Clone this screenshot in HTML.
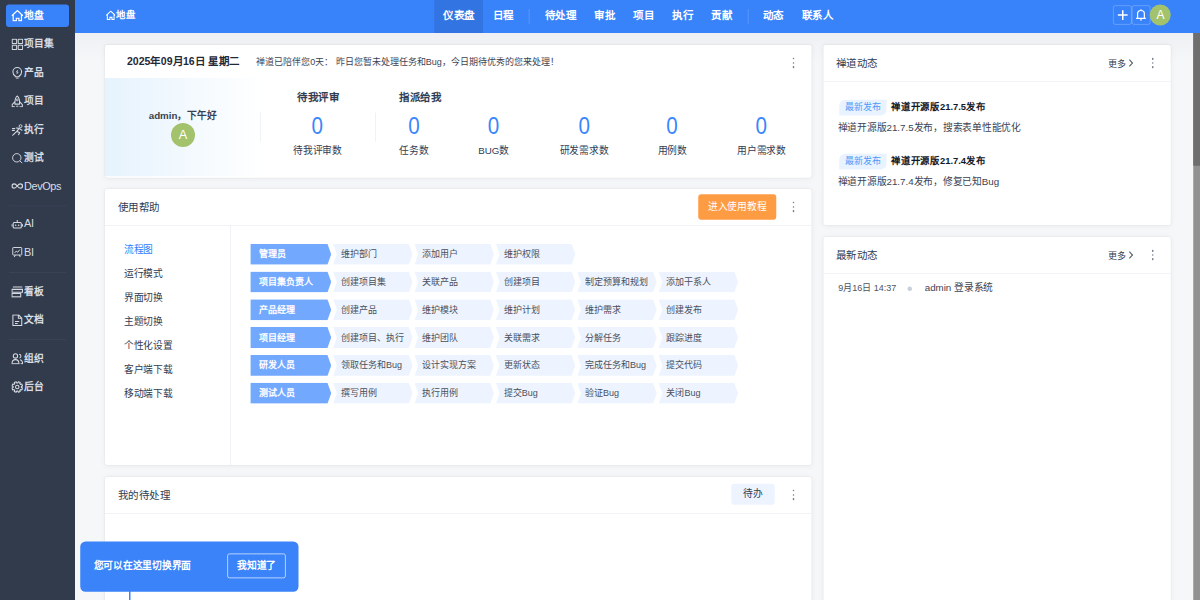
<!DOCTYPE html>
<html lang="zh-CN"><head><meta charset="utf-8">
<style>
*{margin:0;padding:0;box-sizing:border-box}
html,body{width:1200px;height:600px;overflow:hidden;background:#f3f4f7}
body{font-family:"Liberation Sans",sans-serif;color:#313c52}
#root{position:absolute;left:0;top:0;width:1600px;height:800px;transform:scale(.75);transform-origin:0 0;background:#f6f7f9;overflow:hidden}
.a{position:absolute;white-space:nowrap}
#side{position:absolute;left:0;top:0;width:100px;height:800px;background:#313b4c}
.si{position:absolute;left:15px;height:18px;color:#d9dde4;font-size:13px;font-weight:bold;line-height:18px;display:flex;align-items:center;white-space:nowrap}
.si svg{width:16px;height:16px;margin-right:1px;flex:none}
.sdiv{position:absolute;left:12px;width:76px;height:1px;background:#3d4558}
#act{position:absolute;left:8px;top:5.8px;width:84px;height:30.2px;background:#3883fa;border-radius:4px}
#hdr{position:absolute;left:100px;top:0;width:1500px;height:44px;background:#3883fa}
.nav{position:absolute;top:0;height:44px;line-height:40px;color:#fff;font-size:14px;font-weight:bold;white-space:nowrap}
.nsep{position:absolute;top:12px;width:1px;height:20px;background:rgba(255,255,255,.22)}
.card{position:absolute;background:#fff;border-radius:3px;box-shadow:0 0 0 1px rgba(0,0,0,.03),0 1px 8px rgba(20,30,60,.05)}
.dots{position:absolute;width:3px}
.dots i{display:block;width:2.4px;height:2.4px;background:#737986;border-radius:50%;margin-bottom:3.2px}
.ttl{font-size:14px;color:#313c52}
.num{font-size:32px;color:#3a86fc;text-align:center;line-height:34px;transform:scaleX(.86)}
.lbl{font-size:13px;color:#313c52;text-align:center}
.role,.step{position:absolute;height:28px;line-height:28px;font-size:12px;white-space:nowrap}
.role{background:#73a8ff;color:#fff;clip-path:polygon(0 0,103px 0,108px 50%,103px 100%,0 100%);width:108px;padding-left:12px;font-weight:bold}
.step{background:#edf4ff;color:#4a4f5c;clip-path:polygon(0 0,101px 0,106px 50%,101px 100%,0 100%,5px 50%);width:106px;padding-left:10.5px}
.hl{position:absolute;left:0;width:100%;height:1px;background:#eceef2}
.li{position:absolute;left:60px;font-size:13px;line-height:18px;white-space:nowrap}
</style></head><body>
<div id="root">
<div id="side">
  <div id="act"></div>
<div class="si" style="top:11.7px;color:#fff;"><svg viewBox="0 0 16 16" fill="none" stroke="#fff" stroke-width="1.3"><path stroke-width="1.6" d="M.8 8 8.2 1 15.6 8M2.6 6.5V14.6H6.8V11.3H10.2V14.6H13.6V6.5"/></svg>地盘</div>
<div class="si" style="top:49.5px;"><svg viewBox="0 0 16 16" fill="none" stroke="#d6d9e0" stroke-width="1.3"><g stroke-width="1.35"><rect x="1.3" y="1.2" width="5.9" height="5.9" rx=".4"/><rect x="9.3" y="1.2" width="5.9" height="5.9" rx=".4"/><rect x="1.3" y="9.2" width="5.9" height="5.9" rx=".4"/><rect x="9.3" y="9.2" width="5.9" height="5.9" rx=".4"/></g></svg>项目集</div>
<div class="si" style="top:87.5px;"><svg viewBox="0 0 16 16" fill="none" stroke="#d6d9e0" stroke-width="1.3"><path stroke-width="1.4" d="M5.4 12.4C3.4 11.3 2.2 9.2 2.2 6.8A5.8 5.8 0 0 1 13.8 6.8C13.8 9.2 12.6 11.3 10.6 12.4V13.4H5.4ZM6.2 15.4H9.8"/><path stroke-width="1.1" d="M8.8 4.4 6.8 7.1H9.2L7.2 9.8"/></svg>产品</div>
<div class="si" style="top:125.5px;"><svg viewBox="0 0 16 16" fill="none" stroke="#d6d9e0" stroke-width="1.3"><path stroke-width="1.4" stroke-linejoin="round" d="M8 .8C5.5 3 4.6 6.5 4.9 11.8H11.1C11.4 6.5 10.5 3 8 .8ZM4.9 8.6 1.2 12.4V15.2H4.9M11.1 8.6 14.8 12.4V15.2H11.1M6.6 14.6H9.4"/><circle cx="8" cy="6.2" r="1.3" stroke-width="1.2"/></svg>项目</div>
<div class="si" style="top:163.5px;"><svg viewBox="0 0 16 16" fill="none" stroke="#d6d9e0" stroke-width="1.3"><circle cx="12.4" cy="3.2" r="1.9" stroke-width="1.3"/><path stroke-width="1.5" stroke-linecap="round" stroke-linejoin="round" d="M10.6 6.2 7.4 10.2 11.2 11.8 9.8 14.6M7.4 10.2 1.8 15.4M10.6 6.2 14.2 8.6M10.6 6.2 6.8 5.6M1.6 6.4H4.6M1.4 8.8H4.2"/></svg>执行</div>
<div class="si" style="top:201.5px;"><svg viewBox="0 0 16 16" fill="none" stroke="#d6d9e0" stroke-width="1.3"><circle cx="7.4" cy="7.4" r="5.6"/><path d="M11.4 11.4 14.6 14.6"/></svg>测试</div>
<div class="si" style="top:239.5px;font-weight:normal;font-size:14.5px;letter-spacing:-.5px;margin-top:-1px;"><svg viewBox="0 0 16 16" fill="none" stroke="#d6d9e0" stroke-width="1.3"><path stroke-width="1.6" d="M8 8C6.4 5.9 5.1 5.1 3.9 5.1A2.9 2.9 0 0 0 3.9 10.9C5.1 10.9 6.4 10.1 8 8 9.6 5.9 10.9 5.1 12.1 5.1A2.9 2.9 0 0 1 12.1 10.9C10.9 10.9 9.6 10.1 8 8Z"/></svg>DevOps</div>
<div class="si" style="top:290.0px;font-weight:normal;font-size:14.5px;letter-spacing:-.5px;margin-top:-1px;"><svg viewBox="0 0 16 16" fill="none" stroke="#d6d9e0" stroke-width="1.3"><rect x="2.6" y="6.6" width="10.8" height="7.4" rx="1.3" stroke-width="1.4"/><path stroke-width="1.4" d="M8 6.6V3.2M1 9v3M15 9v3"/><circle cx="6" cy="10.3" r=".5" fill="#d6d9e0"/><circle cx="10" cy="10.3" r=".5" fill="#d6d9e0"/></svg>AI</div>
<div class="si" style="top:328.0px;font-weight:normal;font-size:14.5px;letter-spacing:-.5px;margin-top:-1px;"><svg viewBox="0 0 16 16" fill="none" stroke="#d6d9e0" stroke-width="1.3"><rect x="2" y="2" width="12" height="10" rx=".8"/><path d="M4.6 9.2 6.6 6.8 8.6 8.3 11.4 4.8M5.4 12 4 14.8M10.6 12 12 14.8"/></svg>BI</div>
<div class="si" style="top:379.5px;"><svg viewBox="0 0 16 16" fill="none" stroke="#d6d9e0" stroke-width="1.3"><path stroke-width="1.4" d="M2.2 1.6H14.8M1 4.8H15V8.6H1ZM1 10.4H12.6V14.8H1Z"/></svg>看板</div>
<div class="si" style="top:417.5px;"><svg viewBox="0 0 16 16" fill="none" stroke="#d6d9e0" stroke-width="1.3"><path stroke-width="1.4" stroke-linejoin="round" d="M2.2 .9H9.8L14 5.1V15.1H2.2ZM9.5 .9V5.4H14M5 9.6H10.6M5 12.3H8.6"/></svg>文档</div>
<div class="si" style="top:468.5px;"><svg viewBox="0 0 16 16" fill="none" stroke="#d6d9e0" stroke-width="1.3"><circle cx="5.6" cy="4.6" r="2.9" stroke-width="1.4"/><path stroke-width="1.4" d="M.9 15.1c0-3.4 2-5.6 4.7-5.6s4.7 2.2 4.7 5.6ZM10.4 2.2a2.6 2.6 0 0 1 .6 5.1M11.6 9.7c2.1.4 3.5 2.4 3.5 5.4H12.4"/></svg>组织</div>
<div class="si" style="top:506.5px;"><svg viewBox="0 0 16 16" fill="none" stroke="#d6d9e0" stroke-width="1.3"><path stroke-linejoin="round" stroke-width="1.4" d="M15.05 9.45 L14.01 11.96 L12.36 11.35 L11.35 12.36 L11.96 14.01 L9.45 15.05 L8.71 13.45 L7.29 13.45 L6.55 15.05 L4.04 14.01 L4.65 12.36 L3.64 11.35 L1.99 11.96 L0.95 9.45 L2.55 8.71 L2.55 7.29 L0.95 6.55 L1.99 4.04 L3.64 4.65 L4.65 3.64 L4.04 1.99 L6.55 0.95 L7.29 2.55 L8.71 2.55 L9.45 0.95 L11.96 1.99 L11.35 3.64 L12.36 4.65 L14.01 4.04 L15.05 6.55 L13.45 7.29 L13.45 8.71Z"/><circle cx="8" cy="8" r="2.3" stroke-width="1.4"/></svg>后台</div>
  <div class="sdiv" style="top:274px"></div>
  <div class="sdiv" style="top:363px"></div>
  <div class="sdiv" style="top:452px"></div>
</div>

<div id="hdr">
  <div class="a" style="left:40.5px;top:11px;color:#fff;font-weight:bold;font-size:12.5px;line-height:18px;display:flex;align-items:center"><svg viewBox="0 0 16 16" width="13" height="13" fill="none" stroke="#fff" stroke-width="1.7" style="margin-right:1.5px"><path d="M.8 8 8.2 1 15.6 8M2.6 6.5V14.6H6.8V11.3H10.2V14.6H13.6V6.5"/></svg>地盘</div>
  <div style="position:absolute;left:478.7px;top:0;width:65.3px;height:44px;background:#3374e3"></div>
  <div class="nav" style="left:490.7px">仪表盘</div>
  <div class="nav" style="left:557.3px">日程</div>
  <div class="nsep" style="left:605px"></div>
  <div class="nav" style="left:626px">待处理</div>
  <div class="nav" style="left:692px">审批</div>
  <div class="nav" style="left:744px">项目</div>
  <div class="nav" style="left:796px">执行</div>
  <div class="nav" style="left:848.4px">贡献</div>
  <div class="nsep" style="left:896.7px"></div>
  <div class="nav" style="left:917.3px">动态</div>
  <div class="nav" style="left:969.3px">联系人</div>
  <div style="position:absolute;left:1384.4px;top:6.7px;width:24.4px;height:26.4px;border:1px solid rgba(255,255,255,.3);border-radius:3px"></div>
  <div style="position:absolute;left:1408.8px;top:6.7px;width:25.3px;height:26.4px;border:1px solid rgba(255,255,255,.3);border-radius:3px"></div>
  <svg style="position:absolute;left:1388.5px;top:12px" width="16" height="16" viewBox="0 0 16 16" fill="none" stroke="#fff" stroke-width="2"><path d="M8 1.5V14.5M1.5 8H14.5"/></svg>
  <svg style="position:absolute;left:1412px;top:10px" width="17" height="18" viewBox="0 0 17 18" fill="none" stroke="#fff" stroke-width="1.6" stroke-linejoin="round"><path d="M4.8 13.6V8.2C4.8 5.4 6.6 4 9.3 4 12 4 13.8 5.4 13.8 8.2V13.6M2.8 14.6H15.8M8.2 16.6H10.4M9.3 2.4V4"/></svg>
  <div style="position:absolute;left:1433.2px;top:6px;width:28px;height:28px;border-radius:50%;background:#a2c26c;color:#fff;font-size:16px;line-height:28px;text-align:center">A</div>
</div>

<div style="position:absolute;left:100px;top:44px;width:1500px;height:40px;background:linear-gradient(#eff0f3,rgba(246,247,249,0))"></div>
<!-- scrollbar -->
<div style="position:absolute;left:1591px;top:44px;width:9px;height:756px;background:#929292"></div>
<div style="position:absolute;left:1591px;top:44px;width:9px;height:177px;background:#6e6e6e"></div>

<!-- card 1 -->
<div class="card" style="left:140px;top:59.5px;width:942px;height:177px;overflow:hidden">
  <div class="a" style="left:29.3px;top:13px;font-size:14px;font-weight:bold;color:#1f2937;line-height:18px">2025年09月16日 星期二</div>
  <div class="a" style="left:201.7px;top:13px;font-size:12px;color:#3c4353;line-height:18px">禅道已陪伴您0天： 昨日您暂未处理任务和Bug，今日期待优秀的您来处理！</div>
  <div class="dots" style="left:916.7px;top:17.6px"><i></i><i></i><i></i></div>
  <div style="position:absolute;left:0;top:44.5px;width:214px;height:131px;background:linear-gradient(90deg,#e6f3fd,#ffffff)"></div>
  <div class="a" style="left:58.3px;top:86px;font-size:13px;font-weight:bold;color:#374151;line-height:18px">admin，下午好</div>
  <div style="position:absolute;left:88px;top:104.5px;width:32px;height:32px;border-radius:50%;background:#a2c26c;color:#fff;font-size:17px;line-height:32px;text-align:center">A</div>
  <div style="position:absolute;left:207.3px;top:90.5px;width:1px;height:39.3px;background:#eceef2"></div>
  <div class="a" style="left:256px;top:61px;font-size:14px;font-weight:bold;line-height:18px">待我评审</div>
  <div class="a num" style="left:258.3px;top:91.3px;width:50px">0</div>
  <div class="a lbl" style="left:248.3px;top:132px;width:70px;line-height:18px">待我评审数</div>
  <div style="position:absolute;left:360px;top:90.5px;width:1px;height:39.3px;background:#eceef2"></div>
  <div class="a" style="left:392.5px;top:61px;font-size:14px;font-weight:bold;line-height:18px">指派给我</div>
  <div class="a num" style="left:387px;top:91.3px;width:50px">0</div>
  <div class="a lbl" style="left:372px;top:132px;width:80px;line-height:18px">任务数</div>
  <div class="a num" style="left:493.3px;top:91.3px;width:50px">0</div>
  <div class="a lbl" style="left:478.3px;top:132px;width:80px;line-height:18px">BUG数</div>
  <div class="a num" style="left:613.5px;top:91.3px;width:50px">0</div>
  <div class="a lbl" style="left:588.5px;top:132px;width:100px;line-height:18px">研发需求数</div>
  <div class="a num" style="left:731.4px;top:91.3px;width:50px">0</div>
  <div class="a lbl" style="left:716.4px;top:132px;width:80px;line-height:18px">用例数</div>
  <div class="a num" style="left:850.2px;top:91.3px;width:50px">0</div>
  <div class="a lbl" style="left:825.2px;top:132px;width:100px;line-height:18px">用户需求数</div>
</div>

<!-- card 2 -->
<div class="card" style="left:140px;top:251.5px;width:942px;height:368.5px">
  <div class="a ttl" style="left:16.7px;top:15px;line-height:18px">使用帮助</div>
  <div style="position:absolute;left:790.7px;top:7.5px;width:104px;height:34px;background:#fe9c44;border-radius:4px;color:#fff;font-size:13px;line-height:34px;text-align:center">进入使用教程</div>
  <div class="dots" style="left:916.7px;top:17.6px"><i></i><i></i><i></i></div>
  <div class="hl" style="top:48.5px"></div>
  <div style="position:absolute;left:167.4px;top:49px;width:1px;height:320px;background:#eceef2"></div>
  <div class="li" style="left:25px;top:72px;color:#2e7fff">流程图</div>
  <div class="li" style="left:25px;top:104px">运行模式</div>
  <div class="li" style="left:25px;top:136px">界面切换</div>
  <div class="li" style="left:25px;top:168px">主题切换</div>
  <div class="li" style="left:25px;top:200px">个性化设置</div>
  <div class="li" style="left:25px;top:232px">客户端下载</div>
  <div class="li" style="left:25px;top:264px">移动端下载</div>
</div>
<div class="role" style="left:333.6px;top:325.0px">管理员</div>
<div class="step" style="left:444.1px;top:325.0px">维护部门</div>
<div class="step" style="left:552.6px;top:325.0px">添加用户</div>
<div class="step" style="left:661.1px;top:325.0px">维护权限</div>
<div class="role" style="left:333.6px;top:362.0px">项目集负责人</div>
<div class="step" style="left:444.1px;top:362.0px">创建项目集</div>
<div class="step" style="left:552.6px;top:362.0px">关联产品</div>
<div class="step" style="left:661.1px;top:362.0px">创建项目</div>
<div class="step" style="left:769.6px;top:362.0px">制定预算和规划</div>
<div class="step" style="left:878.1px;top:362.0px">添加干系人</div>
<div class="role" style="left:333.6px;top:399.1px">产品经理</div>
<div class="step" style="left:444.1px;top:399.1px">创建产品</div>
<div class="step" style="left:552.6px;top:399.1px">维护模块</div>
<div class="step" style="left:661.1px;top:399.1px">维护计划</div>
<div class="step" style="left:769.6px;top:399.1px">维护需求</div>
<div class="step" style="left:878.1px;top:399.1px">创建发布</div>
<div class="role" style="left:333.6px;top:436.1px">项目经理</div>
<div class="step" style="left:444.1px;top:436.1px">创建项目、执行</div>
<div class="step" style="left:552.6px;top:436.1px">维护团队</div>
<div class="step" style="left:661.1px;top:436.1px">关联需求</div>
<div class="step" style="left:769.6px;top:436.1px">分解任务</div>
<div class="step" style="left:878.1px;top:436.1px">跟踪进度</div>
<div class="role" style="left:333.6px;top:473.2px">研发人员</div>
<div class="step" style="left:444.1px;top:473.2px">领取任务和Bug</div>
<div class="step" style="left:552.6px;top:473.2px">设计实现方案</div>
<div class="step" style="left:661.1px;top:473.2px">更新状态</div>
<div class="step" style="left:769.6px;top:473.2px">完成任务和Bug</div>
<div class="step" style="left:878.1px;top:473.2px">提交代码</div>
<div class="role" style="left:333.6px;top:510.2px">测试人员</div>
<div class="step" style="left:444.1px;top:510.2px">撰写用例</div>
<div class="step" style="left:552.6px;top:510.2px">执行用例</div>
<div class="step" style="left:661.1px;top:510.2px">提交Bug</div>
<div class="step" style="left:769.6px;top:510.2px">验证Bug</div>
<div class="step" style="left:878.1px;top:510.2px">关闭Bug</div>

<!-- card 3 -->
<div class="card" style="left:140px;top:635.5px;width:942px;height:200px">
  <div class="a ttl" style="left:17.3px;top:15px;line-height:18px">我的待处理</div>
  <div style="position:absolute;left:835px;top:9.5px;width:58px;height:28px;background:#edf4ff;border-radius:4px;color:#313c52;font-size:13px;line-height:28px;text-align:center">待办</div>
  <div class="dots" style="left:916.7px;top:17.6px"><i></i><i></i><i></i></div>
  <div class="hl" style="top:48.5px"></div>
</div>

<!-- right card 1 -->
<div class="card" style="left:1098.3px;top:59.5px;width:463px;height:240px">
  <div class="a ttl" style="left:16.1px;top:15px;line-height:18px">禅道动态</div>
  <div class="a" style="left:379.1px;top:16px;font-size:12px;line-height:18px">更多<svg width="8" height="12" viewBox="0 0 8 12" style="margin-left:3px;vertical-align:-1.5px" fill="none" stroke="#5b606b" stroke-width="1.5"><path d="M1.8 1.6 6 6 1.8 10.4"/></svg></div>
  <div class="dots" style="left:437.5px;top:17.7px"><i></i><i></i><i></i></div>
  <div class="hl" style="top:48.5px"></div>
  <div style="position:absolute;left:20.4px;top:73px;width:63.3px;height:21px;background:#e8f3ff;border-radius:8px 0 8px 0;color:#4d9af8;font-size:12px;line-height:21px;text-align:center">最新发布</div>
  <div class="a" style="left:90px;top:74.5px;font-size:12.5px;font-weight:bold;color:#111827;line-height:18px">禅道开源版21.7.5发布</div>
  <div class="a" style="left:18.7px;top:101px;font-size:13px;color:#3c4353;line-height:18px">禅道开源版21.7.5发布，搜索表单性能优化</div>
  <div style="position:absolute;left:20.4px;top:145px;width:63.3px;height:21px;background:#e8f3ff;border-radius:8px 0 8px 0;color:#4d9af8;font-size:12px;line-height:21px;text-align:center">最新发布</div>
  <div class="a" style="left:90px;top:146.5px;font-size:12.5px;font-weight:bold;color:#111827;line-height:18px">禅道开源版21.7.4发布</div>
  <div class="a" style="left:18.7px;top:173px;font-size:13px;color:#3c4353;line-height:18px">禅道开源版21.7.4发布，修复已知Bug</div>
</div>

<!-- right card 2 -->
<div class="card" style="left:1098.3px;top:315.5px;width:463px;height:500px">
  <div class="a ttl" style="left:16.1px;top:15px;line-height:18px">最新动态</div>
  <div class="a" style="left:379.1px;top:16px;font-size:12px;line-height:18px">更多<svg width="8" height="12" viewBox="0 0 8 12" style="margin-left:3px;vertical-align:-1.5px" fill="none" stroke="#5b606b" stroke-width="1.5"><path d="M1.8 1.6 6 6 1.8 10.4"/></svg></div>
  <div class="dots" style="left:437.5px;top:17.7px"><i></i><i></i><i></i></div>
  <div class="hl" style="top:48.5px"></div>
  <div class="a" style="left:19.4px;top:59px;font-size:12px;color:#4b5563;line-height:18px">9月16日 14:37</div>
  <div style="position:absolute;left:111.4px;top:66.2px;width:6px;height:6px;border-radius:50%;background:#c9d0dc"></div>
  <div class="a" style="left:134.7px;top:59px;font-size:13px;color:#3c4353;line-height:18px">admin 登录系统</div>
</div>

<!-- popup -->
<div style="position:absolute;left:107.2px;top:722.1px;width:290.5px;height:66.6px;background:#3a83f9;border-radius:7px"></div>
<div class="a" style="left:124.8px;top:745.5px;font-size:13px;font-weight:bold;color:#fff;line-height:18px">您可以在这里切换界面</div>
<div style="position:absolute;left:303.2px;top:737.9px;width:78px;height:33.6px;border:1.3px solid rgba(255,255,255,.85);border-radius:3px;color:#fff;font-size:13px;font-weight:bold;line-height:31px;text-align:center">我知道了</div>
<div style="position:absolute;left:171.5px;top:787px;width:2.2px;height:13px;background:#3a83f9"></div>
</div>
</body></html>
